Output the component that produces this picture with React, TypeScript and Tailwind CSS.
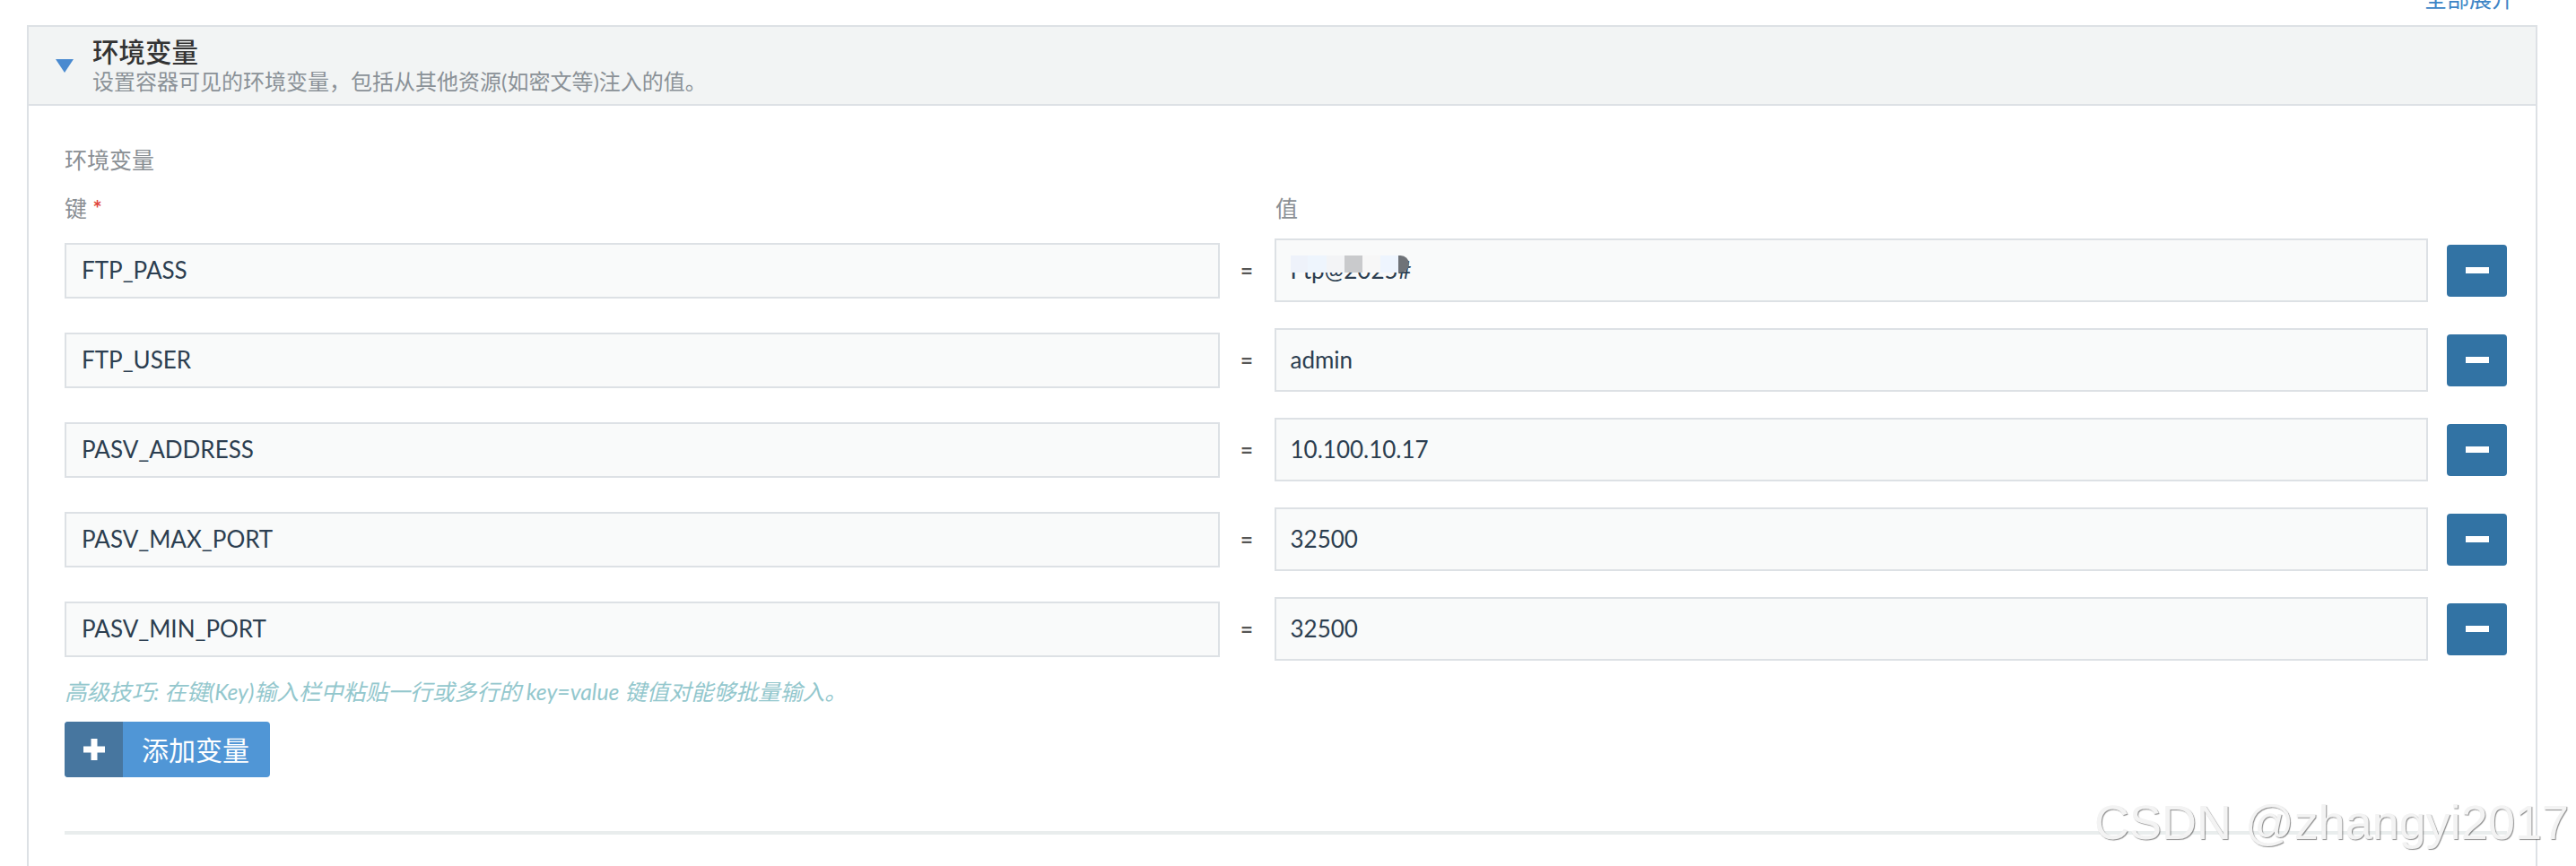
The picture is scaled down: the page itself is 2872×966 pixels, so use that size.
const rows = [
  { name: "FTP_PASS", value: "Ftp@2025#", masked: true },
  { name: "FTP_USER", value: "admin" },
  { name: "PASV_ADDRESS", value: "10.100.10.17" },
  { name: "PASV_MAX_PORT", value: "32500" },
  { name: "PASV_MIN_PORT", value: "32500" },
];

// pixelated blur over the secret value
const mask = [
  { w: "w-[19px]", c: "bg-[#eef2fa]" },
  { w: "w-[21px]", c: "bg-[#eef5fd]" },
  { w: "w-[20px]", c: "bg-[#f3f4f6]" },
  { w: "w-[20px]", c: "bg-[#c9cacc]" },
  { w: "w-[20px]", c: "bg-[#f7f7f7]" },
  { w: "w-[20px]", c: "bg-[#eef5fe]" },
  { w: "w-[12px] rounded-r-full", c: "bg-[#6f7378]" },
];

export default function App() {
  return (
    <div className="relative h-[966px] overflow-hidden bg-white pl-[30px] pr-[43px] font-[Lato,'Noto_Sans_CJK_SC',sans-serif]">
      <div className="flex h-[28px] justify-end pr-[26px]">
        <a className="-mt-[14px] cursor-pointer text-[25px] leading-[25px] text-[#3d85c6]">
          全部展开
        </a>
      </div>

      <div className="h-[938px] border-x-2 border-t-2 border-[#dde1e5]">
        <div className="flex h-[88px] items-center gap-[21px] border-b-2 border-[#dde1e5] bg-[#f2f4f4] pl-[30px]">
          <svg width="20" height="15" viewBox="0 0 20 15">
            <path d="M0 0h20L10 15z" fill="#4a8ad0" />
          </svg>
          <div className="flex flex-col gap-[7px]">
            <span className="text-[29.5px] font-medium leading-[29px] text-[#333]">环境变量</span>
            <span className="text-[24px] leading-[24px] text-[#8a9197]">
              设置容器可见的环境变量，包括从其他资源(如密文等)注入的值。
            </span>
          </div>
        </div>

        <div className="flex flex-col pl-[40px] pr-[32px] pt-[48px]">
          <span className="text-[25px] leading-[25px] text-[#8a8f94]">环境变量</span>
          <div className="mt-[29px] flex text-[25px] leading-[25px] text-[#8a8f94]">
            <span className="flex-1">
              键 <span className="text-[24px] font-bold text-[#e0463c]">*</span>
            </span>
            <span className="w-[61px]" />
            <span className="flex-1 pl-[4px]">值</span>
            <span className="w-[88px]" />
          </div>

          <div className="mt-[21px] flex flex-col gap-[29px]">
            {rows.map((row) => (
              <div key={row.name} className="flex h-[71px] items-center">
                <div className="flex h-[62px] flex-1 items-center border-2 border-[#dde1e5] bg-[#f9fafa] pl-[17px] text-[26px] text-[#2c3e50]">
                  {row.name}
                </div>
                <span className="w-[61px] text-center text-[24px] font-bold text-[#555]">=</span>
                <div className="relative flex h-[71px] flex-1 items-center border-2 border-[#dde1e5] bg-[#f9fafa] pl-[16px] text-[26px] text-[#2c3e50]">
                  {row.value}
                  {row.masked && (
                    <div className="absolute left-[16px] top-[17px] flex h-[19px]">
                      {mask.map((m, i) => (
                        <span key={i} className={`${m.w} ${m.c} h-full`} />
                      ))}
                    </div>
                  )}
                </div>
                <button className="ml-[21px] flex h-[58px] w-[67px] items-center justify-center rounded-[4px] bg-[#3273a4]">
                  <span className="h-[7px] w-[26px] bg-white" />
                </button>
              </div>
            ))}
          </div>

          <p className="mt-[23px] text-[24.8px] italic leading-[24px] text-[#93c7cd]">
            高级技巧: 在键(Key)输入栏中粘贴一行或多行的 key=value 键值对能够批量输入。
          </p>

          <button className="mt-[21px] flex h-[62px] w-[229px] overflow-hidden rounded-[4px] bg-[#5096d6]">
            <span className="flex h-full w-[65px] items-center justify-center bg-[#47769f]">
              <svg width="24" height="24" viewBox="0 0 24 24">
                <path d="M8.5 0h7v8.5H24v7h-8.5V24h-7v-8.5H0v-7h8.5z" fill="white" />
              </svg>
            </span>
            <span className="flex h-full items-center pl-[21px] text-[30px] text-white">添加变量</span>
          </button>

          <div className="mt-[60px] h-[4px] bg-[#e9eded]" />
        </div>
      </div>

      <span className="absolute right-[8px] top-[890px] font-['Liberation_Sans',sans-serif] text-[54px] leading-[54px] text-[#f3f3f3] [text-shadow:1px_1px_1px_rgba(0,0,0,0.45)]">
        CSDN @zhangyi2017
      </span>
    </div>
  );
}
